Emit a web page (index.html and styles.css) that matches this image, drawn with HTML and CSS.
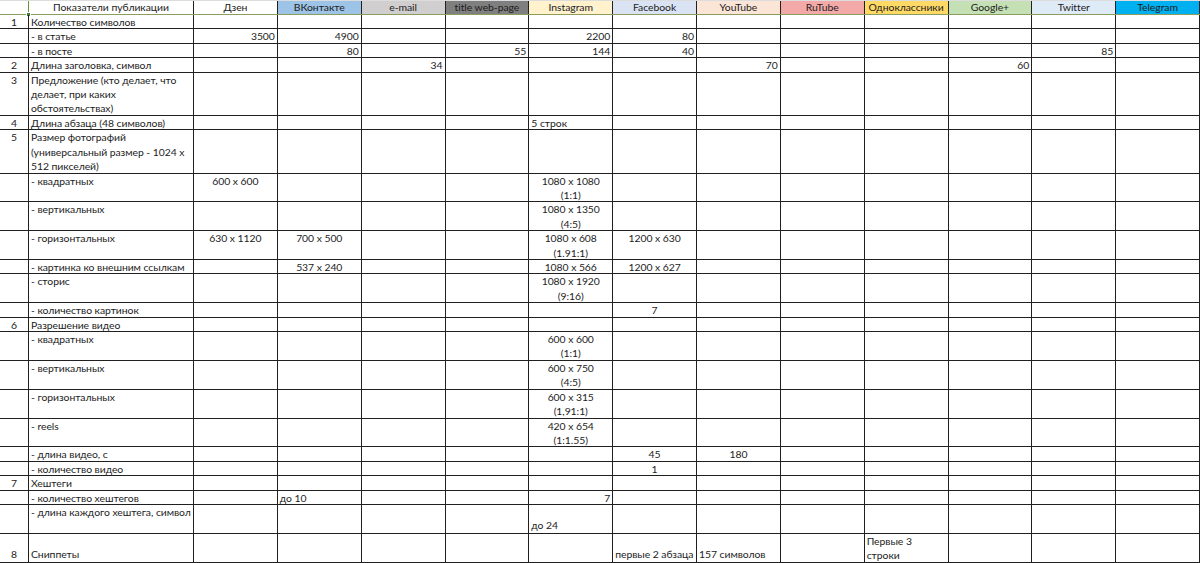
FILE: index.html
```html
<!DOCTYPE html>
<html lang="ru">
<head>
<meta charset="utf-8">
<title>Показатели публикации</title>
<link rel="stylesheet" href="styles.css">
</head>
<body>
<div class="sheet">
  <div class="row head">
    <div class="c num sel"></div>
    <div class="c ctr">Показатели публикации</div>
    <div class="c ctr">Дзен</div>
    <div class="c ctr vk">ВКонтакте</div>
    <div class="c ctr mail">e-mail</div>
    <div class="c ctr web">title web-page</div>
    <div class="c ctr ig">Instagram</div>
    <div class="c ctr fb">Facebook</div>
    <div class="c ctr yt">YouTube</div>
    <div class="c ctr rt">RuTube</div>
    <div class="c ctr ok">Одноклассники</div>
    <div class="c ctr gp">Google+</div>
    <div class="c ctr tw">Twitter</div>
    <div class="c ctr tg">Telegram</div>
    <span class="handle"></span>
  </div>

  <div class="row h1">
    <div class="c num">1</div><div class="c">Количество символов</div>
    <div class="c"></div><div class="c"></div><div class="c"></div><div class="c"></div><div class="c"></div><div class="c"></div><div class="c"></div><div class="c"></div><div class="c"></div><div class="c"></div><div class="c"></div><div class="c"></div>
  </div>
  <div class="row h1">
    <div class="c num"></div><div class="c">- в статье</div>
    <div class="c r">3500</div><div class="c r">4900</div><div class="c"></div><div class="c"></div><div class="c r">2200</div><div class="c r">80</div><div class="c"></div><div class="c"></div><div class="c"></div><div class="c"></div><div class="c"></div><div class="c"></div>
  </div>
  <div class="row h1">
    <div class="c num"></div><div class="c">- в посте</div>
    <div class="c"></div><div class="c r">80</div><div class="c"></div><div class="c r">55</div><div class="c r">144</div><div class="c r">40</div><div class="c"></div><div class="c"></div><div class="c"></div><div class="c"></div><div class="c r">85</div><div class="c"></div>
  </div>
  <div class="row h1">
    <div class="c num">2</div><div class="c">Длина заголовка, символ</div>
    <div class="c"></div><div class="c"></div><div class="c r">34</div><div class="c"></div><div class="c"></div><div class="c"></div><div class="c r">70</div><div class="c"></div><div class="c"></div><div class="c r">60</div><div class="c"></div><div class="c"></div>
  </div>
  <div class="row h3">
    <div class="c num">3</div><div class="c">Предложение (кто делает, что<br>делает, при каких<br>обстоятельствах)</div>
    <div class="c"></div><div class="c"></div><div class="c"></div><div class="c"></div><div class="c"></div><div class="c"></div><div class="c"></div><div class="c"></div><div class="c"></div><div class="c"></div><div class="c"></div><div class="c"></div>
  </div>
  <div class="row h1">
    <div class="c num">4</div><div class="c">Длина абзаца (48 символов)</div>
    <div class="c"></div><div class="c"></div><div class="c"></div><div class="c"></div><div class="c">5 строк</div><div class="c"></div><div class="c"></div><div class="c"></div><div class="c"></div><div class="c"></div><div class="c"></div><div class="c"></div>
  </div>
  <div class="row h3">
    <div class="c num">5</div><div class="c">Размер фотографий<br>(универсальный размер - 1024 x<br>512 пикселей)</div>
    <div class="c"></div><div class="c"></div><div class="c"></div><div class="c"></div><div class="c"></div><div class="c"></div><div class="c"></div><div class="c"></div><div class="c"></div><div class="c"></div><div class="c"></div><div class="c"></div>
  </div>
  <div class="row h2">
    <div class="c num"></div><div class="c">- квадратных</div>
    <div class="c ctr">600 x 600</div><div class="c"></div><div class="c"></div><div class="c"></div><div class="c ctr">1080 x 1080<br>(1:1)</div><div class="c"></div><div class="c"></div><div class="c"></div><div class="c"></div><div class="c"></div><div class="c"></div><div class="c"></div>
  </div>
  <div class="row h2">
    <div class="c num"></div><div class="c">- вертикальных</div>
    <div class="c"></div><div class="c"></div><div class="c"></div><div class="c"></div><div class="c ctr">1080 x 1350<br>(4:5)</div><div class="c"></div><div class="c"></div><div class="c"></div><div class="c"></div><div class="c"></div><div class="c"></div><div class="c"></div>
  </div>
  <div class="row h2">
    <div class="c num"></div><div class="c">- горизонтальных</div>
    <div class="c ctr">630 x 1120</div><div class="c ctr">700 x 500</div><div class="c"></div><div class="c"></div><div class="c ctr">1080 x 608<br>(1.91:1)</div><div class="c ctr">1200 x 630</div><div class="c"></div><div class="c"></div><div class="c"></div><div class="c"></div><div class="c"></div><div class="c"></div>
  </div>
  <div class="row h1">
    <div class="c num"></div><div class="c">- картинка ко внешним ссылкам</div>
    <div class="c"></div><div class="c ctr">537 x 240</div><div class="c"></div><div class="c"></div><div class="c ctr">1080 x 566</div><div class="c ctr">1200 x 627</div><div class="c"></div><div class="c"></div><div class="c"></div><div class="c"></div><div class="c"></div><div class="c"></div>
  </div>
  <div class="row h2">
    <div class="c num"></div><div class="c">- сторис</div>
    <div class="c"></div><div class="c"></div><div class="c"></div><div class="c"></div><div class="c ctr">1080 x 1920<br>(9:16)</div><div class="c"></div><div class="c"></div><div class="c"></div><div class="c"></div><div class="c"></div><div class="c"></div><div class="c"></div>
  </div>
  <div class="row h1">
    <div class="c num"></div><div class="c">- количество картинок</div>
    <div class="c"></div><div class="c"></div><div class="c"></div><div class="c"></div><div class="c"></div><div class="c ctr">7</div><div class="c"></div><div class="c"></div><div class="c"></div><div class="c"></div><div class="c"></div><div class="c"></div>
  </div>
  <div class="row h1">
    <div class="c num">6</div><div class="c">Разрешение видео</div>
    <div class="c"></div><div class="c"></div><div class="c"></div><div class="c"></div><div class="c"></div><div class="c"></div><div class="c"></div><div class="c"></div><div class="c"></div><div class="c"></div><div class="c"></div><div class="c"></div>
  </div>
  <div class="row h2">
    <div class="c num"></div><div class="c">- квадратных</div>
    <div class="c"></div><div class="c"></div><div class="c"></div><div class="c"></div><div class="c ctr">600 x 600<br>(1:1)</div><div class="c"></div><div class="c"></div><div class="c"></div><div class="c"></div><div class="c"></div><div class="c"></div><div class="c"></div>
  </div>
  <div class="row h2">
    <div class="c num"></div><div class="c">- вертикальных</div>
    <div class="c"></div><div class="c"></div><div class="c"></div><div class="c"></div><div class="c ctr">600 x 750<br>(4:5)</div><div class="c"></div><div class="c"></div><div class="c"></div><div class="c"></div><div class="c"></div><div class="c"></div><div class="c"></div>
  </div>
  <div class="row h2">
    <div class="c num"></div><div class="c">- горизонтальных</div>
    <div class="c"></div><div class="c"></div><div class="c"></div><div class="c"></div><div class="c ctr">600 x 315<br>(1,91:1)</div><div class="c"></div><div class="c"></div><div class="c"></div><div class="c"></div><div class="c"></div><div class="c"></div><div class="c"></div>
  </div>
  <div class="row h2">
    <div class="c num"></div><div class="c">- reels</div>
    <div class="c"></div><div class="c"></div><div class="c"></div><div class="c"></div><div class="c ctr">420 x 654<br>(1:1.55)</div><div class="c"></div><div class="c"></div><div class="c"></div><div class="c"></div><div class="c"></div><div class="c"></div><div class="c"></div>
  </div>
  <div class="row h1">
    <div class="c num"></div><div class="c">- длина видео, с</div>
    <div class="c"></div><div class="c"></div><div class="c"></div><div class="c"></div><div class="c"></div><div class="c ctr">45</div><div class="c ctr">180</div><div class="c"></div><div class="c"></div><div class="c"></div><div class="c"></div><div class="c"></div>
  </div>
  <div class="row h1">
    <div class="c num"></div><div class="c">- количество видео</div>
    <div class="c"></div><div class="c"></div><div class="c"></div><div class="c"></div><div class="c"></div><div class="c ctr">1</div><div class="c"></div><div class="c"></div><div class="c"></div><div class="c"></div><div class="c"></div><div class="c"></div>
  </div>
  <div class="row h1">
    <div class="c num">7</div><div class="c">Хештеги</div>
    <div class="c"></div><div class="c"></div><div class="c"></div><div class="c"></div><div class="c"></div><div class="c"></div><div class="c"></div><div class="c"></div><div class="c"></div><div class="c"></div><div class="c"></div><div class="c"></div>
  </div>
  <div class="row h1">
    <div class="c num"></div><div class="c">- количество хештегов</div>
    <div class="c"></div><div class="c">до 10</div><div class="c"></div><div class="c"></div><div class="c r">7</div><div class="c"></div><div class="c"></div><div class="c"></div><div class="c"></div><div class="c"></div><div class="c"></div><div class="c"></div>
  </div>
  <div class="row h2">
    <div class="c num"></div><div class="c">- длина каждого хештега, символ</div>
    <div class="c"></div><div class="c"></div><div class="c"></div><div class="c"></div><div class="c bot">до 24</div><div class="c"></div><div class="c"></div><div class="c"></div><div class="c"></div><div class="c"></div><div class="c"></div><div class="c"></div>
  </div>
  <div class="row h2 last">
    <div class="c num bot">8</div><div class="c bot">Сниппеты</div>
    <div class="c"></div><div class="c"></div><div class="c"></div><div class="c"></div><div class="c"></div><div class="c bot">первые 2 абзаца</div><div class="c bot">157 символов</div><div class="c"></div><div class="c">Первые 3<br>строки</div><div class="c"></div><div class="c"></div><div class="c"></div>
  </div>
</div>
</body>
</html>
```

FILE: styles.css
```css
* { box-sizing: border-box; }

html, body {
  margin: 0;
  padding: 0;
  background: #ffffff;
}

body {
  font-family: Lato, "Open Sans", "Liberation Sans", sans-serif;
  font-size: 10.4px;
  letter-spacing: -0.05px;
  color: #1c1c1c;
  overflow: hidden;
}

.sheet {
  width: 1200px;
  display: flex;
  flex-direction: column;
}

.row {
  position: relative;
  display: grid;
  grid-template-columns: 29px 165px repeat(12, 1fr);
  height: 14.42px;
  border-bottom: 1px solid #202020;
}

.row.h1 { height: 14.42px; }
.row.h2 { height: 28.84px; }
.row.h3 { height: 43.26px; }

.row.head {
  height: 15px;
  border-top: 1px solid #dcdcdc;
  border-bottom: 1px solid #8a9d5c;
}

.c {
  border-right: 1px solid #202020;
  padding: 0 2px;
  line-height: 14.42px;
  white-space: nowrap;
  overflow: hidden;
  display: flex;
  flex-direction: column;
  justify-content: flex-start;
  align-items: flex-start;
}

.head .c {
  line-height: 13px;
  align-items: center;
}

.c.num { align-items: center; }
.c.ctr { align-items: center; text-align: center; }
.c.r { align-items: flex-end; }
.c.bot { justify-content: flex-end; }

.head .sel { border-right-color: #6f8f3f; }

.vk   { background: #9dc3e6; }
.mail { background: #d0cece; }
.web  { background: #7f7f7f; }
.ig   { background: #fff2cc; }
.fb   { background: #dae3f3; }
.yt   { background: #fbe5d6; }
.rt   { background: #f4a9a9; }
.ok   { background: #ffd966; }
.gp   { background: #c5e0b4; }
.tw   { background: #deebf7; }
.tg   { background: #00b0f0; }

.handle {
  position: absolute;
  left: 26px;
  top: 11px;
  width: 5px;
  height: 5px;
  background: #3f7f3f;
  border: 1px solid #ffffff;
}
```
